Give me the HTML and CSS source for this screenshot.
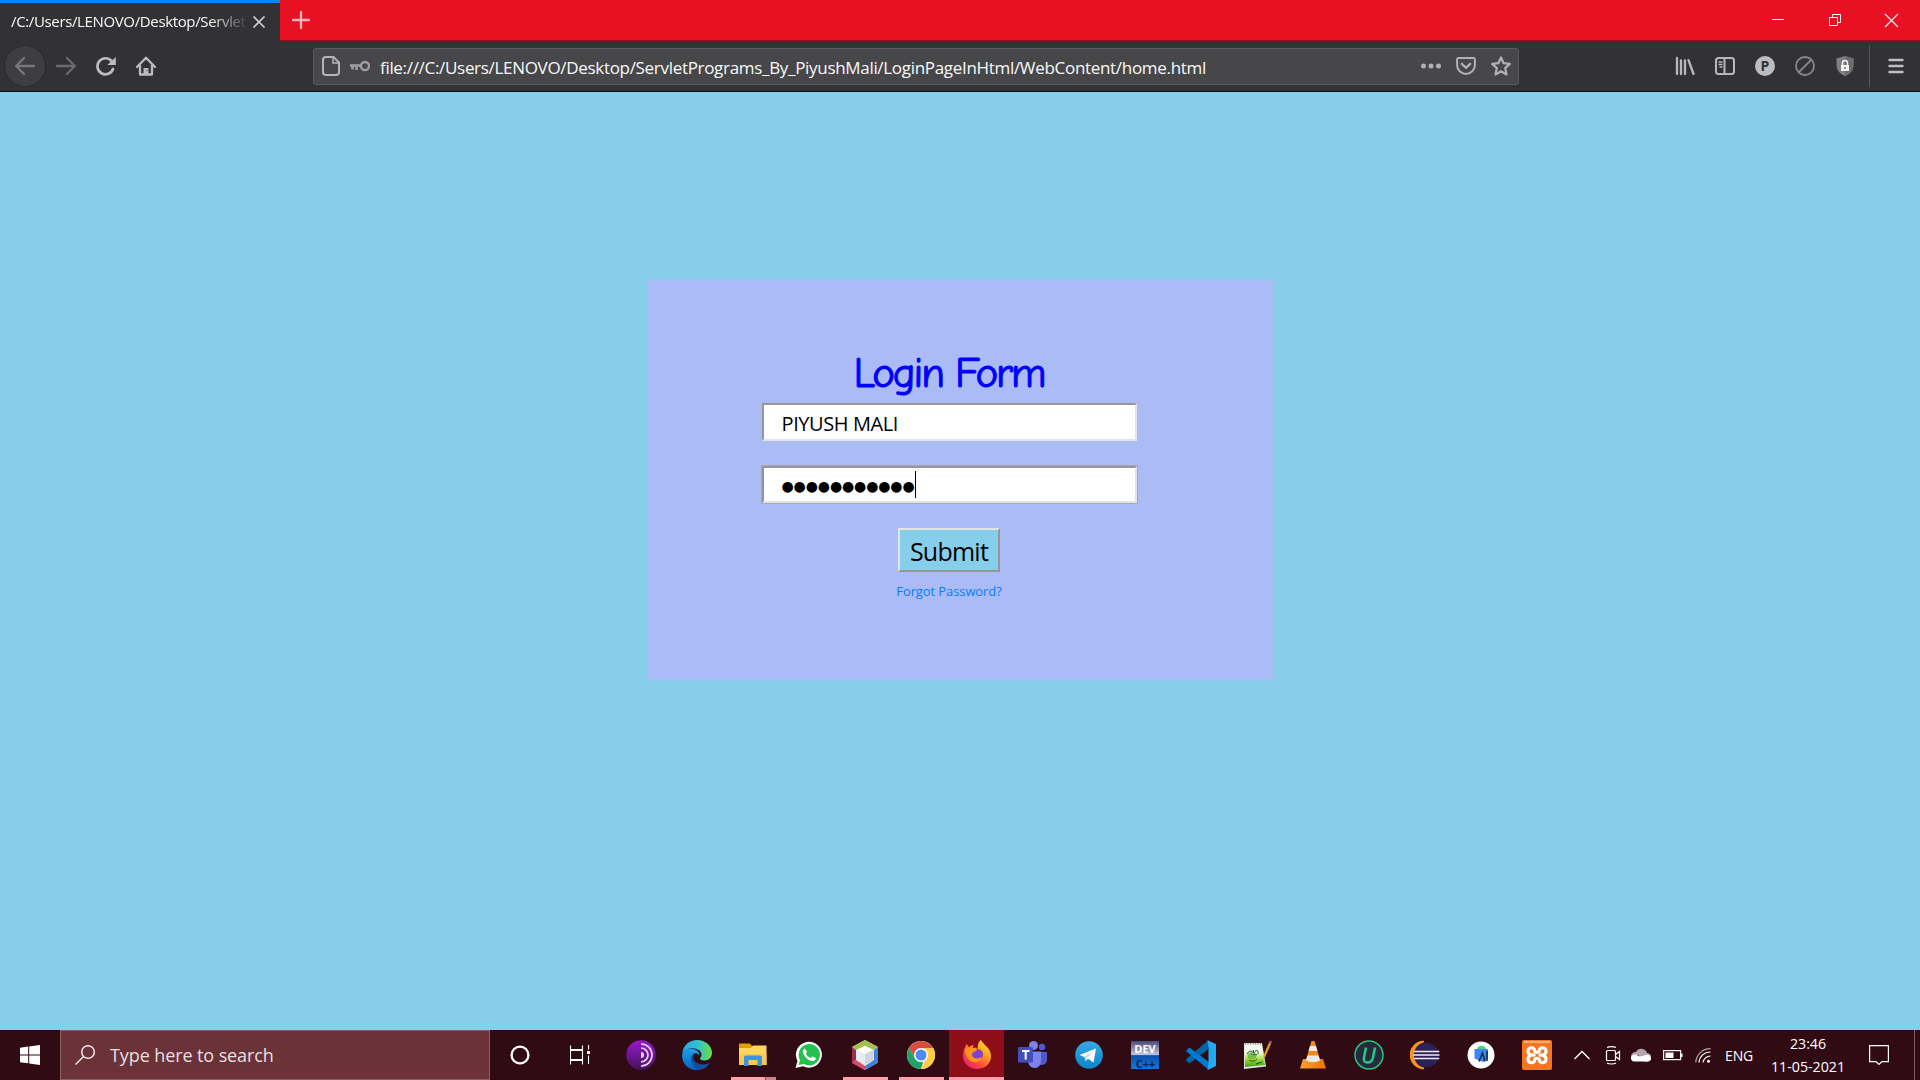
FILE: index.html
```html
<!DOCTYPE html>
<html lang="en">
<head>
<meta charset="utf-8">
<title>Login Form</title>
<link rel="stylesheet" href="styles.css">
</head>
<body>
<header class="titlebar">
  <div class="tab">
    <span class="tab-title">/C:/Users/LENOVO/Desktop/Servlet</span>
    <svg class="tab-close" width="14" height="14" viewBox="0 0 14 14"><path d="M1.5 1.5l11 11M12.5 1.5l-11 11" stroke="#d0d0d2" stroke-width="1.7"/></svg>
  </div>
  <svg class="new-tab" width="18" height="18" viewBox="0 0 18 18"><path d="M9 1v16M1 9h16" stroke="#fbb3b8" stroke-width="2.300" stroke-linecap="round"/></svg>
  <div class="window-controls">
    <svg width="57" height="40" viewBox="0 0 57 40"><path d="M23 19.5h12" stroke="#fff"/></svg>
    <svg width="57" height="40" viewBox="0 0 57 40" fill="none" stroke="#fff"><path d="M23.500 17.500h8v8h-8zM26.500 17.500v-3h8v8h-3"/></svg>
    <svg width="57" height="40" viewBox="0 0 57 40"><path d="M22 14l13 13M35 14l-13 13" stroke="#fff" stroke-width="1.1"/></svg>
  </div>
</header>

<nav class="toolbar">
  <div class="nav-buttons">
    <span class="nav-button back"><svg width="20" height="20" viewBox="0 0 20 20" fill="none" stroke="#77777a" stroke-width="2.300" stroke-linecap="round" stroke-linejoin="round"><path d="M19 10H1.500M9 2L1.200 10 9 18"/></svg></span>
    <span class="nav-button"><svg width="20" height="20" viewBox="0 0 20 20" fill="none" stroke="#6b6b6e" stroke-width="2.300" stroke-linecap="round" stroke-linejoin="round"><path d="M1 10h17.500M11 2l7.800 8L11 18"/></svg></span>
    <span class="nav-button"><svg width="20" height="20" viewBox="0 0 20 20"><path d="M15.500 5A8 8 0 1 0 17 13" fill="none" stroke="#bcbcbe" stroke-width="2.700" stroke-linecap="round"/><path d="M19.800 1v8h-8.500z" fill="#bcbcbe"/></svg></span>
    <span class="nav-button"><svg width="20" height="20" viewBox="0 0 20 20"><path d="M1 11L10 1.800 19 11M4 9v9.500h12V9" fill="none" stroke="#bcbcbe" stroke-width="2.300" stroke-linecap="round" stroke-linejoin="round"/><path d="M7.500 18v-6h5v6z" fill="#bcbcbe"/><path d="M10.500 14.500h1" stroke="#323234"/></svg></span>
  </div>
  <div class="urlbar">
    <svg class="page-icon" width="18" height="20" viewBox="0 0 18 20" fill="none" stroke="#b4b4b6" stroke-width="2"><path d="M4 1h7.500L17 6.500V16a3 3 0 0 1-3 3H4a3 3 0 0 1-3-3V4a3 3 0 0 1 3-3z"/><path d="M11 1v6h6" stroke-width="1.500"/></svg>
    <svg class="key-icon" width="20" height="12" viewBox="0 0 20 12" fill="none" stroke="#a0a0a2" stroke-width="2.300"><circle cx="15" cy="6" r="4"/><path d="M11 5.500H0M2.500 6v3.500M6.500 6v4" stroke-width="2.500"/></svg>
    <span class="url">file:///C:/Users/LENOVO/Desktop/ServletPrograms_By_PiyushMali/LoginPageInHtml/WebContent/home.html</span>
    <div class="url-actions">
      <svg width="20" height="20" viewBox="0 0 20 20" fill="#b1b1b3"><circle cx="2.500" cy="10" r="2.500"/><circle cx="10" cy="10" r="2.500"/><circle cx="17.500" cy="10" r="2.500"/></svg>
      <svg width="20" height="20" viewBox="0 0 20 20" fill="none" stroke="#b1b1b3" stroke-width="2" stroke-linecap="round" stroke-linejoin="round"><path d="M2.500 2h15a1.400 1.400 0 0 1 1.400 1.400V9a8.900 8.900 0 0 1-17.800 0V3.400A1.400 1.400 0 0 1 2.500 2z"/><path d="M5.800 7.800L10 11.800l4.200-4" stroke-width="2.300"/></svg>
      <svg width="20" height="20" viewBox="0 0 20 20" fill="none" stroke="#b1b1b3" stroke-width="2.200" stroke-linejoin="round"><path d="M10 1.500l2.600 5.700 6.200.7-4.600 4.200 1.300 6.400L10 15.300l-5.500 3.200 1.300-6.400L1.200 7.900l6.200-.7z"/></svg>
    </div>
  </div>
  <div class="tools">
    <svg width="20" height="20" viewBox="0 0 20 20" stroke="#b8b8ba" stroke-width="2.300" stroke-linecap="round"><path d="M2 2v16M6 4.500V18M10 4.500V18M13.500 4.200L18.500 18"/></svg>
    <svg width="20" height="20" viewBox="0 0 20 20" fill="none" stroke="#b8b8ba" stroke-width="2"><rect x="1" y="2" width="18" height="16" rx="2.500"/><path d="M9.500 2v16"/><path d="M3.500 6h4M3.500 8.500h4M4.500 11h3" stroke-width="1.300"/></svg>
    <svg width="20" height="20" viewBox="0 0 20 20"><circle cx="10" cy="10" r="10" fill="#bdbdbf"/><text x="10" y="15" text-anchor="middle" class="letter-p">P</text></svg>
    <svg width="20" height="20" viewBox="0 0 20 20" fill="none" stroke="#88888a" stroke-width="1.800"><circle cx="10" cy="10" r="9"/><path d="M4 16L16 4"/></svg>
    <svg width="20" height="20" viewBox="0 0 20 20"><path d="M10 0l8.500 2.500V9c0 5-3.500 9-8.500 11C5 18 1.500 14 1.500 9V2.500z" fill="#808082"/><path d="M10 0l8.500 2.500V9c0 5-3.500 9-8.500 11z" fill="#6d6d70"/><rect x="6" y="9" width="8" height="6" fill="#f2f2f2"/><path d="M7.500 9V7a2.500 2.500 0 0 1 5 0v2" fill="none" stroke="#f2f2f2" stroke-width="1.500"/><circle cx="10" cy="12" r="1" fill="#777"/></svg>
  </div>
  <svg class="menu-icon" width="16" height="16" viewBox="0 0 16 16" stroke="#c0c0c2" stroke-width="2.400" stroke-linecap="round"><path d="M1.500 2h13M1.500 8h13M1.500 14h13"/></svg>
</nav>

<main class="page">
  <form class="login">
    <h1 class="login-title">Login Form</h1>
    <div class="field"><span class="name">PIYUSH MALI</span></div>
    <div class="field focused"><span class="dots">●●●●●●●●●●●</span><span class="caret"></span></div>
    <button class="submit" type="button">Submit</button>
    <a class="forgot">Forgot Password?</a>
  </form>
</main>

<footer class="taskbar">
  <div class="start"><svg width="20" height="20" viewBox="0 0 20 20" fill="#fff"><path d="M0 2.800l8.200-1.200v7.800H0zM9.200 1.500L20 0v9.400H9.200zM0 10.400h8.200v7.900L0 17.200zM9.200 10.400H20V20L9.200 18.500z"/></svg></div>
  <div class="search">
    <svg width="20" height="20" viewBox="0 0 20 20" fill="none" stroke="#f0e6e7" stroke-width="1.500"><circle cx="13" cy="7" r="6.300"/><path d="M8.500 11.500L.5 19.500"/></svg>
    <span>Type here to search</span>
  </div>
  <div class="app wide"><svg width="20" height="20" viewBox="0 0 20 20"><circle cx="10" cy="10" r="8.400" fill="none" stroke="#fff" stroke-width="2.300"/></svg></div>
  <div class="app wide"><svg width="20" height="20" viewBox="0 0 20 20" fill="none" stroke="#fff" stroke-width="1.100"><path d="M.5 .5v4h12v-4M.5 5.500v9h12v-9zM.5 19.500v-4h12v4M18.500 0v4.500M18.500 10.500V19"/><path d="M17 6h3v3h-3z" fill="#fff" stroke="none"/></svg></div>

  <div class="app"><svg width="30" height="30" viewBox="0 0 30 30"><defs><linearGradient id="tor" x2="0" y2="1"><stop stop-color="#9a18d0"/><stop offset="1" stop-color="#43145c"/></linearGradient></defs><circle cx="15" cy="15" r="14.700" fill="url(#tor)"/><g fill="none" stroke="#e6d4ef" stroke-width="1.700"><path d="M15 4a11 11 0 0 1 0 22M15 8a7 7 0 0 1 0 14"/></g><path d="M15 12a3 3 0 0 1 0 6z" fill="#e6d4ef"/></svg></div>
  <div class="app"><svg width="30" height="30" viewBox="0 0 30 30"><defs><linearGradient id="edge-top"><stop stop-color="#27a7ec"/><stop offset=".55" stop-color="#30c4c8"/><stop offset="1" stop-color="#6ee03c"/></linearGradient><linearGradient id="edge-left" x2="0" y2="1"><stop stop-color="#1ba0e6"/><stop offset="1" stop-color="#0562c4"/></linearGradient></defs><path d="M.3 13C1.500 5 7.500 0 15 0c8.500 0 15 5.800 15 13 0 4.500-3.300 7.400-7.300 7.400-3.800 0-5.700-1.400-4.200-3 2.500-2.700.5-7.400-5-8.700C8 7.500 3 9 .3 13z" fill="url(#edge-top)"/><path d="M.2 14C2 8.800 7.500 7.500 12 9c4 1.300 6 4 5 6.500-2-3.500-6-2.500-6.500 1-.8 5.500 4.500 10 11 8.500L17 30C7 31-.8 24 .2 14z" fill="url(#edge-left)"/><path d="M10.500 14c-3.500 6 0 14.500 6.500 16 4.500-.3 9-3 11-7.500-5 3.500-15 2-16.500-3.500-.5-1.700-.5-3.500-1-5z" fill="#114f9e"/></svg></div>
  <div class="app explorer"><svg width="30" height="30" viewBox="0 0 30 30"><path d="M1 3.500h11l2 2.500h2v4H1z" fill="#e0a000"/><path d="M1 8h12l2-2.500h13.500V25H1z" fill="#ffd65c"/><path d="M1 14h27.500v11H1z" fill="#fbc94b"/><path d="M6 26V17.500a2 2 0 0 1 2-2h14a2 2 0 0 1 2 2V26h-4.500v-6h-9v6z" fill="#3a94de"/></svg></div>
  <div class="app"><svg width="30" height="30" viewBox="0 0 30 30"><path d="M1.500 28l2-7A13 13 0 1 1 9 26.300z" fill="#fff"/><path d="M4.500 25l1.500-5a10.700 10.700 0 1 1 4 4z" fill="#25c150"/><path d="M10.800 8.500c-1.800.5-2.500 2.500-1.500 5 1.500 3.700 5 7 9 7.500 2 .2 3.500-.8 3.600-3l-3.400-1.800-1.700 1.800c-2.300-.8-4-2.500-4.900-4.500l1.200-1.700z" fill="#fff"/></svg></div>
  <div class="app open"><svg width="30" height="30" viewBox="0 0 30 30"><path d="M15 0l13 7v15.500L15 30 2 22.500V7z" fill="#d7e6ef"/><path d="M15 0l13 7-4 3-9-4-9 4-4-3z" fill="#a5c14a"/><path d="M2 7l4 3v10l-4 3z" fill="#983150"/><path d="M2 23l4-3 9 6v4z" fill="#dd4964"/><path d="M28 7v15.500L15 30v-4l9-6V10z" fill="#3c82d6"/><path d="M15 6l8 4v10l-8 4.500L7 20V10z" fill="#e9edef"/><path d="M7 10l8 4 8-4-8-4z" fill="#fff"/><path d="M15 14l8-4v10l-8 4.500z" fill="#cfd5da"/></svg></div>
  <div class="app open"><svg width="30" height="30" viewBox="0 0 30 30"><circle cx="15" cy="15" r="14" fill="#e3e3e3"/><path d="M2.900 8A14 14 0 0 1 27.100 8H15a7 7 0 0 0-6 10.500z" fill="#dd4b3e"/><path d="M2.900 8l6.100 10.500A7 7 0 0 0 17 21.700L15 29A14 14 0 0 1 2.900 8z" fill="#1da362"/><path d="M27.100 8A14 14 0 0 1 14.600 29L21 18.500A7 7 0 0 0 15 8z" fill="#ffcd46"/><circle cx="15" cy="15" r="6.800" fill="#fff"/><circle cx="15" cy="15" r="5.500" fill="#4c8bf5"/></svg></div>
  <div class="app open active"><svg width="30" height="30" viewBox="0 0 30 30"><defs><linearGradient id="fx" x1="1" x2=".2" y2="1"><stop stop-color="#fff44f"/><stop offset=".35" stop-color="#ffae20"/><stop offset=".7" stop-color="#ff4b3a"/><stop offset="1" stop-color="#e5187d"/></linearGradient></defs><path d="M18.500 0c2.500 2 3 4 5.500 6 3.500 3 5 6.500 5 10.500C29 23.500 23 29 15 29S1 23.500 1 15.500C1 11 3 8 4.500 4l2.500 3c1.500-1 3-2 4.500-2l-.5 3c2 0 3.500.5 4.500 1.500C15.500 6 16 2.500 18.500 0z" fill="url(#fx)"/><circle cx="15.500" cy="14.500" r="5.500" fill="#8142cf"/><path d="M3 9c4-2 7.500 0 11-1.500 1.500 1.500 1 3-1 4-2.500 1-3.500 2-3 4 .8 3 6 4.500 10 1-1 5-6 7-10.500 5C5 19.500 3.500 15 3 9z" fill="#ff961c"/></svg></div>
  <div class="app"><svg width="30" height="30" viewBox="0 0 30 30"><circle cx="24" cy="7" r="3.200" fill="#5059c9"/><path d="M19 12h10v8a5 5 0 0 1-5 5h-3z" fill="#5059c9"/><circle cx="15.500" cy="5.500" r="4.500" fill="#7b83eb"/><path d="M10 11.500h13v9c0 5-3 7.500-6.500 7.500S10 25 10 20.500z" fill="#7b83eb"/><rect y="7" width="15" height="15.500" rx="1.300" fill="#444ebd"/><path d="M4 11h7.500M7.700 11v8.500" stroke="#fff" stroke-width="2"/></svg></div>
  <div class="app"><svg width="30" height="30" viewBox="0 0 30 30"><defs><linearGradient id="tg" x2="0" y2="1"><stop stop-color="#35a9e3"/><stop offset="1" stop-color="#0c86c9"/></linearGradient></defs><circle cx="15" cy="15" r="13.800" fill="url(#tg)"/><path d="M5.500 15L22 8.500 19.500 22.500 14 18.800 11.500 21 10.500 17z" fill="#fff"/><path d="M10.500 17L20 10.500 12.500 18l-1 3z" fill="#b6d5e7"/></svg></div>
  <div class="app"><svg width="30" height="30" viewBox="0 0 30 30"><defs><linearGradient id="dev" x2="0" y2="1"><stop stop-color="#454873"/><stop offset=".5" stop-color="#c5c6e0"/><stop offset=".52" stop-color="#0d4fab"/><stop offset="1" stop-color="#1376de"/></linearGradient></defs><rect x="1" y="1" width="28" height="28" fill="url(#dev)"/><text x="15" y="13" text-anchor="middle" class="dev-top">DEV</text><text x="15.500" y="27.500" text-anchor="middle" class="dev-bottom">C++</text></svg></div>
  <div class="app"><svg width="30" height="30" viewBox="0 0 30 30"><path d="M22.500 0v9L3.500 23.500.3 21v-2z" fill="#0065a9"/><path d="M.3 10.500L3.500 7.500 23 22v8L.3 11.500z" fill="#007acc"/><path d="M21.500.3L30 4v22l-8.500 4 1-8V8z" fill="#23a9f2"/></svg></div>
  <div class="app"><svg width="30" height="30" viewBox="0 0 30 30"><defs><linearGradient id="npp" x2="0" y2="1"><stop offset=".35" stop-color="#f5f8ef"/><stop offset=".65" stop-color="#9fdc35"/><stop offset="1" stop-color="#3c9b18"/></linearGradient></defs><path d="M2 3h18l4 23.500L2 29z" fill="#e5e5df"/><path d="M3 5h16.500l3.500 20L3 27z" fill="url(#npp)"/><path d="M3 3.500h16" stroke="#777" stroke-width="1.500" stroke-dasharray="1 1.500"/><path d="M5 14c2-4 5-3 7-1 2-4 5-3 4 1M7 20c3 2 6 1 8-1M9 14.500h6M14 24l6-2M11 10l2 6" fill="none" stroke="#28451d" stroke-width="1"/><ellipse cx="10" cy="15.500" rx="4.500" ry="3.500" fill="#57ad36" opacity=".7"/><path d="M28.500 2L22 17" stroke="#e8a11b" stroke-width="2.200"/><path d="M29 1l-1 2.500" stroke="#8d5267" stroke-width="2.200"/></svg></div>
  <div class="app"><svg width="30" height="30" viewBox="0 0 30 30"><defs><linearGradient id="vlc"><stop stop-color="#f8a22c"/><stop offset="1" stop-color="#e97400"/></linearGradient></defs><path d="M5 19h20l3 9.500H2z" fill="url(#vlc)"/><path d="M13.500 1h3L22 20c-2 3-12 3-14 0z" fill="#f58a13"/><path d="M12 6h6l1.500 5h-9zM9.500 15.500h11L22 20c-2 3-12 3-14 0z" fill="#e9e9e9"/></svg></div>
  <div class="app"><svg width="30" height="30" viewBox="0 0 30 30"><circle cx="15" cy="15" r="14" fill="#262a3c" stroke="#20c77c" stroke-width="1.500"/><path d="M12 7.500l-2 10c-.7 4 1 5 3.500 5s4.800-1 5.500-5l2-10" fill="none" stroke="#23cb80" stroke-width="2.500"/></svg></div>
  <div class="app"><svg width="30" height="30" viewBox="0 0 30 30"><path d="M14 1a14 14 0 0 0 0 28C3 27 3 3 14 1z" fill="#f7941e"/><path d="M14 .8a14.200 14.200 0 0 0 0 28.400" fill="#f7941e"/><circle cx="17" cy="15" r="13" fill="#310b14"/><circle cx="16.700" cy="15" r="12.300" fill="#2c2255"/><path d="M4 11.500h25.300M3.300 15h26.200M4 18.500h25.300" stroke="#eeeaf5" stroke-width="1.700"/></svg></div>
  <div class="app"><svg width="30" height="30" viewBox="0 0 30 30"><circle cx="15" cy="15" r="13.500" fill="#fff"/><path d="M11 9.500c0-5 9-5 9 0z" fill="#3ddc84"/><path d="M8.500 9H22v10l-5 3-8.500-3.500z" fill="#3f86f5"/><path d="M13 21.500L16.500 13l2.500 8.500M21 11v10" fill="none" stroke="#0c3050" stroke-width="1.600"/></svg></div>
  <div class="app"><svg width="30" height="30" viewBox="0 0 30 30"><rect width="30" height="30" rx="2" fill="#f37623"/><path d="M2 1h26v2H2z" fill="#ffae74"/><path d="M12 15.200C7 15 6 13.500 6 11.300 6 7 12.500 6.300 12.800 11c.2 1.700 4.200 1.700 4.400 0C17.500 6.300 24 7 24 11.300c0 2.200-1 3.200-3 3.900 2 .7 3 1.900 3 4 0 4.300-6.500 4.800-6.800.3-.2-1.700-4.200-1.700-4.400 0C12.500 24 6 23.500 6 19.200c0-2.100 1-3.300 3-4M18 15.200h3" fill="none" stroke="#fff" stroke-width="3.200" stroke-linecap="round"/></svg></div>

  <div class="tray">
    <svg class="chevron" width="18" height="30" viewBox="0 0 18 30"><path d="M1.500 19L9 11.500l7.500 7.500" fill="none" stroke="#fff" stroke-width="1.300"/></svg>
    <svg class="camera" width="16" height="30" viewBox="0 0 16 30" fill="none" stroke="#fff" stroke-width="1.200"><rect x="1.500" y="10.500" width="9" height="10" rx="1"/><path d="M10.500 14.500l4-3v8l-4-3M2 7.500c2-1.300 7-1.300 9 0M2 23c2 1.300 7 1.300 9 0"/></svg>
    <svg class="cloud" width="22" height="30" viewBox="0 0 22 30"><path d="M6 12a6 6 0 0 1 11 1 4 4 0 0 1 4 5l-7-1-8-2-5 2c0-3 2-5 5-5z" fill="#b4a3a8"/><path d="M1 17c2-3 5-3 7-1l13 2c0 2-1 3.500-3.500 3.500H5C2 21.500.5 19.500 1 17z" fill="#fff"/><path d="M8 17l8-2c3-1 5 1 5 4-1 2-3 2.500-6 2.500z" fill="#fff"/></svg>
    <svg class="battery" width="20" height="30" viewBox="0 0 20 30"><rect x=".6" y="10.600" width="17" height="9" fill="none" stroke="#fff" stroke-width="1.200"/><path d="M2.500 12.500h8v5.500h-8zM18 13.500h1.500v3.500H18z" fill="#fff"/></svg>
    <svg class="wifi" width="16" height="30" viewBox="0 0 16 30" fill="none" stroke="#fff" stroke-width="1.200"><path d="M.8 22.500A14.500 14.500 0 0 1 15.500 8.700" stroke="#b7a5a9"/><path d="M4 22.500A11 11 0 0 1 15.500 12M8 22.500A7.500 7.500 0 0 1 15.500 16"/><circle cx="13.500" cy="21.300" r="1.500" fill="#fff" stroke="none"/></svg>
    <span class="lang">ENG</span>
    <div class="clock"><span>23:46</span><span>11-05-2021</span></div>
    <svg class="notify" width="20" height="20" viewBox="0 0 20 20" fill="none" stroke="#fff" stroke-width="1.200"><path d="M.6.6h18.800v16H13l-3 2.800-3-2.800H.6z"/></svg>
  </div>
</footer>
</body>
</html>
```

FILE: styles.css
```css
* { box-sizing: border-box; }
body {
  margin: 0;
  width: 1920px;
  height: 1080px;
  overflow: hidden;
  display: flex;
  flex-direction: column;
  font-family: "Open Sans", "Noto Sans", sans-serif;
}
svg { display: block; flex: none; }

.titlebar {
  height: 41px;
  display: flex;
  background: #e81123;
  box-shadow: inset 0 -1px #9b101b;
}
.tab {
  width: 280px;
  height: 41px;
  padding: 0 14px 0 11px;
  display: flex;
  align-items: center;
  justify-content: space-between;
  background: #323234;
  border-top: 3px solid #0a84ff;
}
.tab-title {
  width: 236px;
  margin-top: -2px;
  overflow: hidden;
  white-space: nowrap;
  font-size: 15px;
  line-height: 24px;
  letter-spacing: -0.36px;
  color: #f9f9fa;
  mask-image: linear-gradient(to right, #000 198px, transparent 238px);
}
.tab-close { margin-top: -1px; }
.new-tab { margin: 11px 0 0 12px; }
.window-controls { display: flex; margin-left: auto; }

.toolbar {
  height: 51px;
  display: flex;
  align-items: center;
  background: #323234;
  border-bottom: 1px solid #0c0c0d;
}
.nav-buttons { display: flex; width: 313px; padding-left: 5px; }
.nav-button {
  width: 40px;
  height: 40px;
  display: flex;
  align-items: center;
  justify-content: center;
}
.back {
  margin-right: 1px;
  background: #3e3e40;
  border-radius: 50%;
  box-shadow: 0 0 0 1px #2b2b2d;
}
.urlbar {
  width: 1206px;
  height: 37px;
  padding: 0 7px 0 8px;
  display: flex;
  align-items: center;
  background: #474749;
  border: 1px solid #5c5c5e;
  border-radius: 3px;
}
.key-icon { margin: 0 10px; }
.url {
  padding-top: 4px;
  font-size: 17px;
  line-height: 26px;
  letter-spacing: -0.31px;
  white-space: nowrap;
  color: #f9f9fa;
}
.url-actions { display: flex; gap: 15px; margin-left: auto; }
.tools {
  height: 42px;
  display: flex;
  align-items: center;
  gap: 20px;
  margin-left: 156px;
  padding-right: 14px;
  border-right: 1px solid #58585a;
}
.menu-icon { margin-left: 18px; }
.letter-p { font: bold 14px "Open Sans", sans-serif; fill: #323234; }

.page {
  height: 938px;
  padding: 188px 0 0 648px;
  background: #87ceeb;
}
.login {
  width: 625px;
  height: 400px;
  padding: 67px 23px 0 0;
  display: flex;
  flex-direction: column;
  align-items: center;
  background: #aabbf6;
}
.login-title {
  margin: 0;
  height: 56px;
  font: 400 43px/52px "Comic Sans MS", "Comic Neue", Lato, sans-serif;
  letter-spacing: -2.1px;
  -webkit-text-stroke: 1px #0000ff;
  color: #0000ff;
}
.field {
  width: 375px;
  height: 38px;
  padding-left: 18px;
  display: flex;
  align-items: center;
  background: #fff;
  border: 2px solid;
  border-color: #969696 #e3e3e3 #e3e3e3 #969696;
}
.name { font-size: 20px; letter-spacing: -0.4px; padding-top: 3px; line-height: 28px; }
.focused { margin-top: 25px; height: 37px; outline: 1px solid #a9a9ad; }
.dots { font: 14px/20px "DejaVu Sans", sans-serif; letter-spacing: -0.12px; padding-top: 3px; }
.caret { width: 1px; height: 27px; background: #000; }
.submit {
  width: 102px;
  height: 44px;
  margin-top: 25px;
  padding: 1px 0 0;
  font: 25px/36px "Open Sans", sans-serif;
  letter-spacing: -0.75px;
  color: #000;
  background: #87ceeb;
  border: 2px solid;
  border-color: #e3e3e3 #969696 #969696 #e3e3e3;
}
.forgot { margin-top: 10px; font-size: 13px; line-height: 18px; letter-spacing: -0.1px; color: #087bff; }

.taskbar {
  height: 50px;
  display: flex;
  color: #fff;
  background: #310b14;
}
.start { width: 60px; display: flex; align-items: center; justify-content: center; }
.search {
  width: 430px;
  padding-left: 14px;
  display: flex;
  align-items: center;
  gap: 15px;
  font-size: 18px;
  letter-spacing: -0.1px;
  color: #eadfe1;
  background: #6b3338;
  border: 1px solid #8d6064;
}
.app {
  width: 56px;
  display: flex;
  align-items: center;
  justify-content: center;
}
.wide { width: 60px; }
.wide + .app:not(.wide) { margin-left: 3px; }
.open { background: linear-gradient(#ffa0ac, #ffa0ac) center bottom / 45px 3px no-repeat; }
.explorer { background: linear-gradient(to right, #ffa0ac 34px, #8a4b58 34px, #8a4b58 35px, #cf8490 35px) center bottom / 45px 3px no-repeat; }
.active {
  width: 55px;
  margin-right: 1px;
  background: linear-gradient(#ffa0ac, #ffa0ac) center bottom / 100% 3px no-repeat, #8d0d19;
}
.dev-top { font: bold 11px/1 "Open Sans", sans-serif; fill: #fff; }
.dev-bottom { font: bold 11px/1 "Open Sans", sans-serif; fill: #0a234d; }

.tray {
  flex: 1;
  display: flex;
  align-items: center;
  padding-left: 8px;
  margin-right: 5px;
  border-right: 1px solid #786167;
}
.camera { margin-left: 14px; }
.cloud { margin-left: 9px; }
.battery { margin-left: 11px; }
.wifi { margin-left: 12px; }
.lang { width: 45px; margin-left: 14px; font-size: 14px; letter-spacing: -0.1px; }
.clock {
  width: 76px;
  display: flex;
  flex-direction: column;
  align-items: center;
  font-size: 14.2px;
  line-height: 23px;
}
.notify { margin-left: 23px; }
```
